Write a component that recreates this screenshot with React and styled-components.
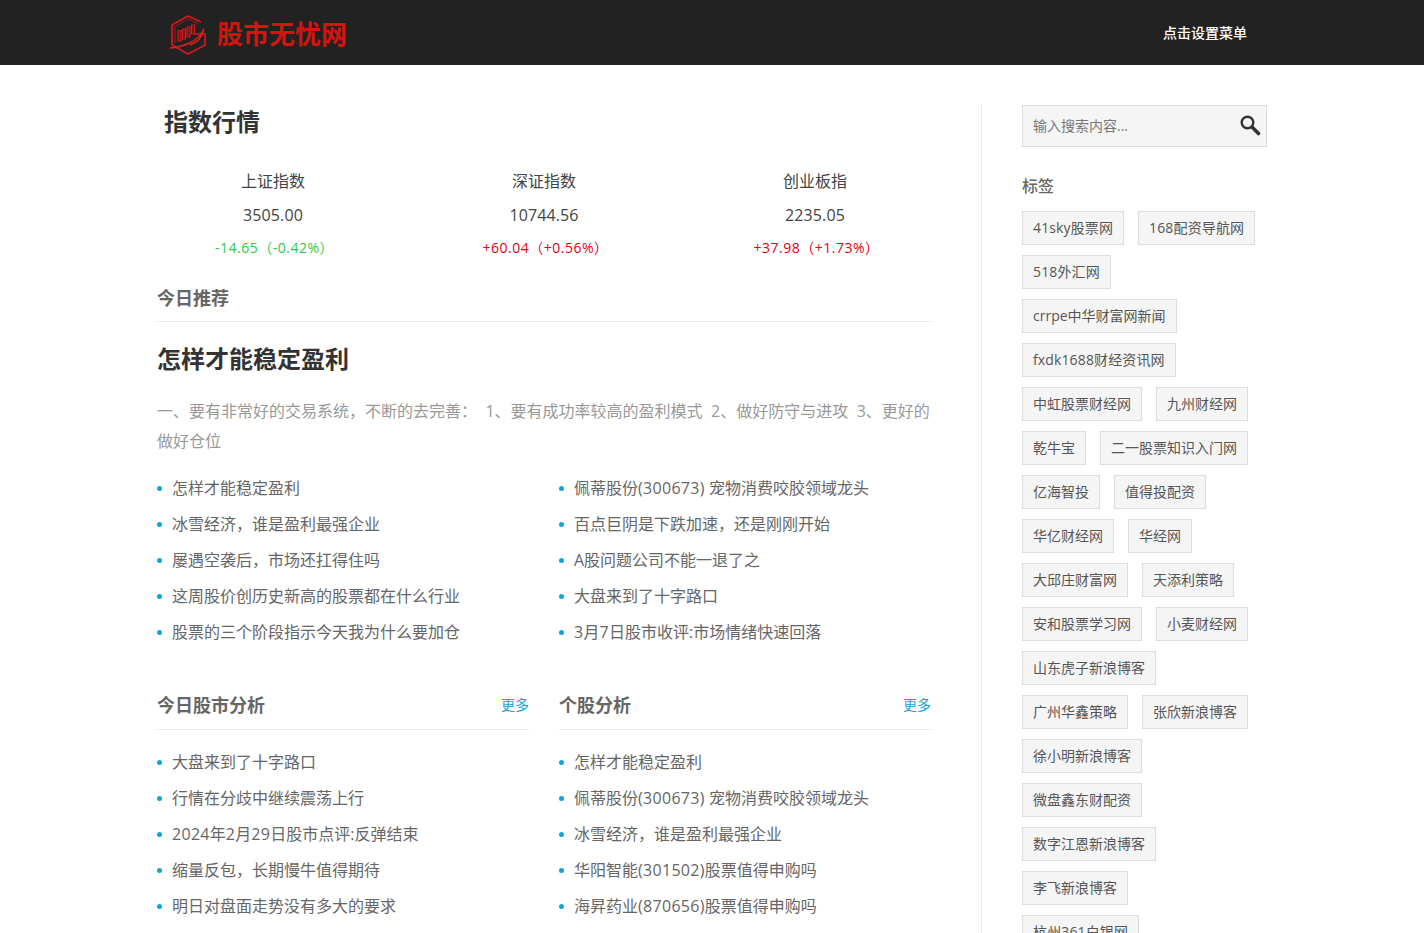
import React from "react";
import styled, { createGlobalStyle } from "styled-components";

const Global = createGlobalStyle`
  html, body { margin: 0; padding: 0; background: #fff; overflow: hidden; height: 933px; }
  body { font-family: "Open Sans", "Noto Sans CJK SC", sans-serif; color: #555; }
  * { box-sizing: border-box; }
`;
const Header = styled.header`
  height: 65px; background: #222; display: flex; align-items: center;
  padding: 0 177px 0 169px; justify-content: space-between;
`;
const Brand = styled.div`display: flex; align-items: center; gap: 10px;`;
const BrandName = styled.span`
  font-size: 26px; font-weight: 700; color: #d4140f; line-height: 36px; padding-top: 2px;
`;
const MenuText = styled.span`color: #fff; font-size: 14px; font-weight: 500; padding-bottom: 2px;`;
const Page = styled.div`
  display: flex; padding: 40px 0 0 157px; align-items: flex-start;
`;
const Main = styled.main`width: 774px; flex: none;`;
const Title = styled.h1`
  margin: -1px 0 0 7px; font-size: 24px; line-height: 36px; font-weight: 700; color: #333;
`;
const Indices = styled.div`display: flex; margin: 24px -19.5px 0;`;
const IndexCol = styled.div`flex: 1; text-align: center;`;
const IndexName = styled.div`font-size: 16px; line-height: 34px; color: #444;`;
const IndexValue = styled.div`font-size: 16px; line-height: 34px; color: #444; letter-spacing: 0.1px;`;
const IndexChange = styled.div`
  font-size: 14px; line-height: 32px; letter-spacing: 0.5px; padding-left: 3px;
  color: ${p => p.$up ? "#e60012" : "#2ecc40"};
`;
const SectionHead = styled.div`
  display: flex; justify-content: space-between; align-items: center;
  height: ${p => p.$h}px; padding-top: ${p => p.$top || 0}px; padding-bottom: ${p => p.$bottom || 0}px;
  border-bottom: 1px solid #e8e8e8;
`;
const SectionTitle = styled.h2`margin: 0; font-size: 18px; font-weight: 700; color: #666;`;
const More = styled.a`font-size: 14px; color: #0ea5dd;`;
const Headline = styled.h2`
  margin: 18px 0 0; font-size: 24px; line-height: 38px; font-weight: 700; color: #333;
`;
const Summary = styled.p`
  margin: 18px 0 0; font-size: 16px; line-height: 30px; color: #999; word-spacing: 4.3px;
`;
const TwoCols = styled.div`
  display: grid; grid-template-columns: 372px 372px; column-gap: 30px; margin-top: ${p => p.$mt}px;
`;
const List = styled.ul`list-style: none; margin: 0; padding: 0;`;
const Item = styled.li`
  position: relative; padding-left: 15px; font-size: 16px; line-height: 36px; color: #666; white-space: nowrap;
  &::before {
    content: ""; position: absolute; left: 0; top: 16px; width: 5px; height: 5px; border-radius: 50%; background: #0ea5dd;
  }
`;
const Num = styled.span`letter-spacing: 0.3px;`;
const Side = styled.aside`
  width: 286px; margin-left: 50px; border-left: 1px solid #e8e8e8; padding-left: 40px; height: 900px;
`;
const Search = styled.div`
  width: 245px; height: 42px; border: 1px solid #ddd; background: #f5f5f5;
  display: flex; align-items: center; justify-content: space-between; padding: 0 4px 2px 10px;
`;
const SearchHint = styled.span`font-size: 14px; color: #777;`;
const SideTitle = styled.h3`
  margin: 27px 0 0; font-size: 16px; line-height: 24px; font-weight: 500; color: #666;
`;
const Tags = styled.div`
  display: flex; flex-direction: column; gap: 10px; margin-top: 13px; width: 245px;
`;
const TagRow = styled.div`display: flex; gap: 14px;`;
const Tag = styled.a`
  height: 34px; padding: 0 10px; border: 1px solid #ddd; background: #f5f5f5;
  font-size: 14px; line-height: 31px; color: #555; white-space: nowrap;
  letter-spacing: ${p => p.$digits ? "0.13px" : "0"};
`;

const Logo = () => (
  <svg width="38" height="44" viewBox="0 0 38 44" fill="none">
    <path d="M32 11 19 5 3 14v20l16 9 17-9V23H25" stroke="#d01a1e" strokeWidth="1.700" />
    <path d="M29 12.500 19 8 6 15.500v17" stroke="#a81417" strokeWidth="1" />
    <path d="M9 19.500h3V30H9zM13.500 18h3v10h-3zM18 16h3v10h-3zM22.500 14h3v9h-3z" fill="#7a1114" stroke="#d01a1e" strokeWidth="1.100" />
    <path d="M1 37C14 36 29 31 35 18c-2 9-8 14-14 16" stroke="#e0201f" strokeWidth="1.400" />
  </svg>
);
const SearchIcon = () => (
  <svg width="24" height="24" viewBox="0 0 24 24" fill="none">
    <circle cx="9.500" cy="9.500" r="5.800" stroke="#333" strokeWidth="2.400" />
    <path d="M14 14l6.500 6.500" stroke="#333" strokeWidth="3.600" strokeLinecap="round" />
  </svg>
);

const C = "\uFF0C";
const rec1 = ["怎样才能稳定盈利",`冰雪经济${C}谁是盈利最强企业`,`屡遇空袭后${C}市场还扛得住吗`,"这周股价创历史新高的股票都在什么行业","股票的三个阶段指示今天我为什么要加仓"];
const rec2 = ["佩蒂股份(300673) 宠物消费咬胶领域龙头",`百点巨阴是下跌加速${C}还是刚刚开始`,"A股问题公司不能一退了之","大盘来到了十字路口","3月7日股市收评:市场情绪快速回落"];
const an1 = ["大盘来到了十字路口","行情在分歧中继续震荡上行","2024年2月29日股市点评:反弹结束",`缩量反包${C}长期慢牛值得期待`,"明日对盘面走势没有多大的要求"];
const an2 = ["怎样才能稳定盈利","佩蒂股份(300673) 宠物消费咬胶领域龙头",`冰雪经济${C}谁是盈利最强企业`,"华阳智能(301502)股票值得申购吗","海昇药业(870656)股票值得申购吗"];
const summary = `一、要有非常好的交易系统${C}不断的去完善\uFF1A 1、要有成功率较高的盈利模式 2、做好防守与进攻 3、更好的做好仓位`;
const tagRows = [["41sky股票网","168配资导航网"],["518外汇网"],["crrpe中华财富网新闻"],["fxdk1688财经资讯网"],["中虹股票财经网","九州财经网"],["乾牛宝","二一股票知识入门网"],["亿海智投","值得投配资"],["华亿财经网","华经网"],["大邱庄财富网","天添利策略"],["安和股票学习网","小麦财经网"],["山东虎子新浪博客"],["广州华鑫策略","张欣新浪博客"],["徐小明新浪博客"],["微盘鑫东财配资"],["数字江恩新浪博客"],["李飞新浪博客"],["杭州361白银网"]];

const withNums = text => text.split(/([0-9()]+)/).map((part, i) => i % 2 ? <Num key={i}>{part}</Num> : part);
const Links = ({ items }) => <List>{items.map(t => <Item key={t}>{withNums(t)}</Item>)}</List>;
const change = (a, b) => `${a}\uFF08${b}\uFF09`;

export default function App() {
  return (
    <>
      <Global />
      <Header>
        <Brand><Logo /><BrandName>股市无忧网</BrandName></Brand>
        <MenuText>点击设置菜单</MenuText>
      </Header>
      <Page>
        <Main>
          <Title>指数行情</Title>
          <Indices>
            <IndexCol><IndexName>上证指数</IndexName><IndexValue>3505.00</IndexValue><IndexChange>{change("-14.65", "-0.42%")}</IndexChange></IndexCol>
            <IndexCol><IndexName>深证指数</IndexName><IndexValue>10744.56</IndexValue><IndexChange $up>{change("+60.04", "+0.56%")}</IndexChange></IndexCol>
            <IndexCol><IndexName>创业板指</IndexName><IndexValue>2235.05</IndexValue><IndexChange $up>{change("+37.98", "+1.73%")}</IndexChange></IndexCol>
          </Indices>
          <SectionHead $h={58} $top={9}><SectionTitle>今日推荐</SectionTitle></SectionHead>
          <Headline>怎样才能稳定盈利</Headline>
          <Summary>{summary}</Summary>
          <TwoCols $mt={14}><Links items={rec1} /><Links items={rec2} /></TwoCols>
          <TwoCols $mt={30}>
            <SectionHead $h={50} $bottom={2}><SectionTitle>今日股市分析</SectionTitle><More>更多</More></SectionHead>
            <SectionHead $h={50} $bottom={2}><SectionTitle>个股分析</SectionTitle><More>更多</More></SectionHead>
          </TwoCols>
          <TwoCols $mt={14}><Links items={an1} /><Links items={an2} /></TwoCols>
        </Main>
        <Side>
          <Search><SearchHint>输入搜索内容...</SearchHint><SearchIcon /></Search>
          <SideTitle>标签</SideTitle>
          <Tags>
            {tagRows.map((r, i) => (
              <TagRow key={i}>
                {r.map(t => <Tag key={t} $digits={/[0-9]/.test(t)}>{t}</Tag>)}
              </TagRow>
            ))}
          </Tags>
        </Side>
      </Page>
    </>
  );
}
